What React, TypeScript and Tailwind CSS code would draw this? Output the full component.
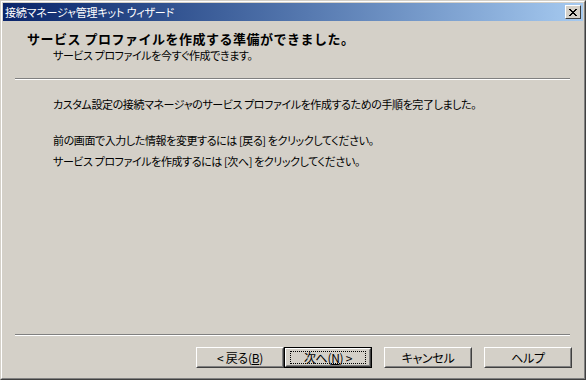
import React from "react";

const jp = "font-['Noto_Sans_CJK_JP','Noto_Sans_CJK_SC',sans-serif] [font-feature-settings:'palt']";

function Btn({ children, def }: { children: React.ReactNode; def?: boolean }) {
  const inner = (
    <div className="w-full h-full border border-t-white border-l-white border-r-[#404040] border-b-[#404040]">
      <div className="w-full h-full border border-t-[#D4D0C8] border-l-[#D4D0C8] border-r-[#808080] border-b-[#808080] flex items-center justify-center">
        {def ? (
          <div className="border border-dotted border-black h-[13px] w-[76px] flex items-center justify-center">
            {children}
          </div>
        ) : (
          children
        )}
      </div>
    </div>
  );
  return (
    <div className={`w-[88px] h-[21px] text-[12px] leading-[14px] tracking-[-0.3px] text-black ${jp} ${def ? "border border-black" : ""}`}>
      {inner}
    </div>
  );
}

export default function App() {
  return (
    <div className="w-[586px] h-[380px] border border-t-[#D4D0C8] border-l-[#D4D0C8] border-r-[#404040] border-b-[#404040] bg-[#D4D0C8]">
      <div className="w-full h-full border border-t-white border-l-white border-r-[#808080] border-b-[#808080] p-px flex flex-col">
        {/* title bar */}
        <div className="h-[18px] flex items-center justify-between bg-gradient-to-r from-[#0A246A] to-[#A6CAF0] pl-[2px] pr-[2px]">
          <span className={`text-white text-[11px] leading-[14px] tracking-[-0.2px] ${jp}`}>接続マネージャ管理キット ウィザード</span>
          <div className="w-[16px] h-[14px] bg-[#D4D0C8] border border-t-white border-l-white border-r-[#404040] border-b-[#404040] flex items-center justify-center">
            <svg width="8" height="7" viewBox="0 0 8 7" shapeRendering="crispEdges">
              <path d="M0 0h2v1H0zM6 0h2v1H6zM1 1h2v1H1zM5 1h2v1H5zM2 2h4v1H2zM3 3h2v1H3zM2 4h4v1H2zM1 5h2v1H1zM5 5h2v1H5zM0 6h2v1H0zM6 6h2v1H6z" fill="#000" />
            </svg>
          </div>
        </div>
        {/* header */}
        <div className="pt-[10px]">
          <div className="pl-[24px] text-[13px] leading-[16px] font-bold tracking-[0.5px] text-black font-['Noto_Sans_CJK_JP',sans-serif]">
            サービス プロファイルを作成する準備ができました。
          </div>
          <div className={`mt-[1px] pl-[50px] text-[11px] leading-[14px] tracking-[-0.4px] text-black ${jp}`}>
            サービス プロファイルを今すぐ作成できます。
          </div>
        </div>
        <div className="mt-[16px] ml-[12px] mr-[13px] border-t border-t-[#808080] border-b border-b-white" />
        {/* body */}
        <div className={`pl-[50px] text-[11px] leading-[14px] tracking-[-0.4px] text-black ${jp}`}>
          <div className="mt-[17px]">カスタム設定の接続マネージャのサービス プロファイルを作成するための手順を完了しました。</div>
          <div className="mt-[22px]">前の画面で入力した情報を変更するには [戻る] をクリックしてください。</div>
          <div className="mt-[7px]">サービス プロファイルを作成するには [次へ] をクリックしてください。</div>
        </div>
        <div className="flex-1" />
        <div className="ml-[12px] mr-[13px] border-t border-t-[#808080] border-b border-b-white" />
        <div className="mt-[11px] mb-[9px] flex justify-end pr-[11px]">
          <Btn>
            <span>&lt; 戻る(<u>B</u>)</span>
          </Btn>
          <Btn def>
            <span>次へ(<u>N</u>) &gt;</span>
          </Btn>
          <div className="w-[12px]" />
          <Btn>
            <span>キャンセル</span>
          </Btn>
          <div className="w-[12px]" />
          <Btn>
            <span>ヘルプ</span>
          </Btn>
        </div>
      </div>
    </div>
  );
}
